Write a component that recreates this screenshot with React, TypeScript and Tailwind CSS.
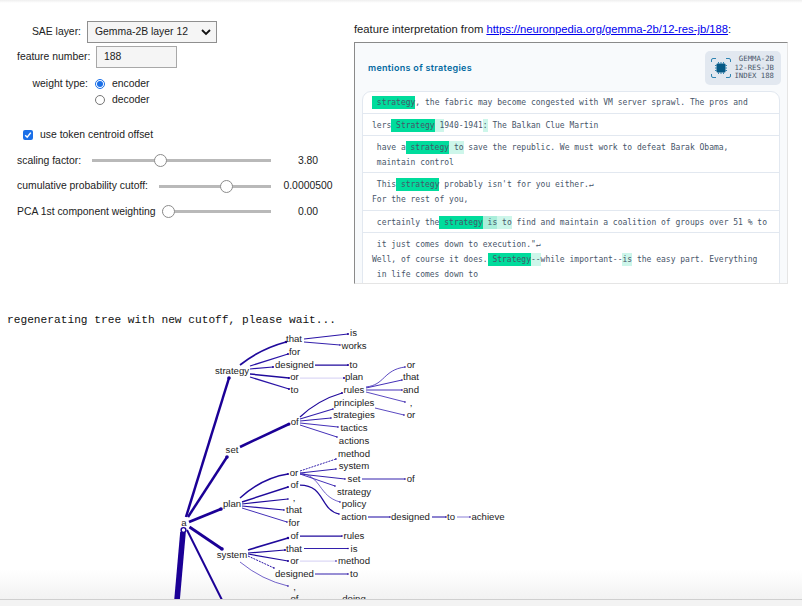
const SANS = "font-['Liberation_Sans',Arial,sans-serif]";

const labels: [string, number, number][] = [
  ["strategy", 232, 371], ["that", 294, 339], ["for", 294.5, 352], ["designed", 294.5, 365],
  ["or", 294.5, 377], ["to", 294.5, 390], ["is", 353.5, 333], ["works", 354, 346],
  ["to", 353.5, 365], ["plan", 354, 377], ["rules", 354, 390], ["or", 411, 365],
  ["that", 411, 377], ["and", 411, 390], [",", 411, 403], ["or", 411, 415],
  ["of", 294.7, 422], ["set", 232, 450], ["principles", 354, 403], ["strategies", 354, 415],
  ["tactics", 354, 428], ["actions", 354, 441], ["method", 354, 453.5], ["system", 354, 466],
  ["or", 294, 472.5], ["of", 294.5, 485], ["set", 354, 479], ["of", 410.7, 479],
  ["strategy", 354, 491.5], ["policy", 354, 504], ["action", 354, 517], ["designed", 410.5, 517],
  ["to", 451, 517], ["achieve", 488, 517], ["plan", 232, 504], [",", 294, 498],
  ["that", 294, 510], ["for", 294, 523], ["a", 184, 523], ["system", 232, 555],
  ["of", 294.5, 536], ["that", 294, 548.5], ["or", 294.5, 561], ["designed", 294.5, 574],
  [",", 294.5, 587], ["of", 294.5, 599], ["rules", 354, 536], ["is", 354, 548.5],
  ["method", 354, 561], ["to", 354, 574], ["doing", 354, 599],
];

// d, stroke width, colour, optional dash
const edges: [string, number, string, string?][] = [
  ["M186 517L229 378", 2, "#1b0096"],
  ["M188 517L227 457", 2, "#1b0096"],
  ["M189 522L221 509", 2.2, "#1b0096"],
  ["M189.5 527L222 549", 2.2, "#1b0096"],
  ["M183 532L176.5 606", 4.5, "#1b0096"],
  ["M187 530L222 600", 1.6, "#1b0096"],
  ["M240 365Q260 349 286 342", 1.4, "#200a9c"],
  ["M250 366L288 354", 1, "#2a14a6"],
  ["M250 369L273 367", 1, "#2a14a6"],
  ["M250 374L289 378", 1.2, "#200a9c"],
  ["M250 377L289 389", 1, "#2a14a6"],
  ["M304 339L348 334", 1, "#2a14a6"],
  ["M304 342L340 345", 0.8, "#3320ac"],
  ["M315 365L348 365", 1, "#200a9c"],
  ["M300 378L344 378", 1, "#dcd8f6"],
  ["M366 387C385 385 383 370 405 367", 0.7, "#4430b8"],
  ["M366 388L402 380", 0.8, "#4430b8"],
  ["M366 390L402 390", 0.8, "#4430b8"],
  ["M366 392L405 402", 0.7, "#4430b8"],
  ["M375 408L404 415", 0.7, "#4430b8"],
  ["M300 417Q318 400 342 393", 1, "#200a9c"],
  ["M300 419L333 409", 0.9, "#3320ac"],
  ["M300 421L331 418", 0.9, "#3320ac"],
  ["M300 423L338 427", 0.8, "#4430b8"],
  ["M300 425L337 437", 0.8, "#4430b8"],
  ["M240 447L289 424", 2, "#1b0096"],
  ["M240 498Q262 478 288 474", 1.2, "#200a9c"],
  ["M242 502L288 487", 1.1, "#200a9c"],
  ["M242 504L288 499", 1, "#200a9c"],
  ["M242 506L284 510", 1, "#2a14a6"],
  ["M242 508L287 522", 0.8, "#4430b8"],
  ["M300 471L336 459", 0.8, "#3320ac", "2 1"],
  ["M300 473L336 469", 0.8, "#3320ac"],
  ["M300 474L345 479", 0.8, "#3320ac"],
  ["M300 474L335 486", 0.8, "#4430b8"],
  ["M300 473C322 476 318 496 340 502", 0.6, "#4430b8"],
  ["M300 485C325 485 320 510 339 514", 1, "#200a9c"],
  ["M362 479L405 479", 0.8, "#3320ac"],
  ["M368 517L390 517", 0.9, "#3320ac"],
  ["M432 517L446 517", 0.9, "#3320ac"],
  ["M457 517L470 517", 0.7, "#7a6dd0"],
  ["M248 550L288 538", 1.4, "#200a9c"],
  ["M248 553L285 550", 1, "#200a9c"],
  ["M248 554L288 561", 1, "#200a9c"],
  ["M248 556L274 568", 0.8, "#2a14a6", "2 1"],
  ["M240 562Q262 580 288 586", 0.6, "#4430b8"],
  ["M300 536L342 536", 1, "#200a9c"],
  ["M304 548.5L348 548.5", 0.8, "#3320ac"],
  ["M300 561L336 561", 1, "#dcd8f6"],
  ["M315 574L348 574", 0.9, "#3320ac"],
];

const dots: [number, number, number][] = [
  [229, 378, 1.8], [227, 457, 1.8], [221, 509, 1.8], [222, 549, 1.8], [286, 342, 1.2], [288, 354, 1],
  [273, 367, 1], [289, 378, 1], [289, 389, 1], [348, 334, 1], [340, 345, 0.8], [348, 365, 1],
  [344, 378, 1], [405, 367, 0.8], [402, 380, 0.8], [402, 390, 0.8], [405, 402, 0.8], [404, 415, 0.8],
  [342, 393, 1], [333, 409, 0.8], [331, 418, 0.8], [338, 427, 0.8], [337, 437, 0.8], [289, 424, 1.5],
  [288, 474, 1], [288, 487, 1], [288, 499, 0.8], [284, 510, 0.8], [287, 522, 0.8], [336, 459, 0.8],
  [336, 469, 0.8], [345, 479, 0.8], [335, 486, 0.8], [340, 502, 0.8], [339, 514, 0.8], [405, 479, 0.8],
  [390, 517, 0.8], [446, 517, 0.8], [470, 517, 0.8], [288, 538, 1.2], [285, 550, 1], [288, 561, 1],
  [274, 568, 0.8], [288, 586, 0.8], [342, 536, 0.8], [348, 548.5, 0.8], [336, 561, 0.8], [348, 574, 0.8],
];

type Seg = { t: string; h?: "s" | "m" | "l" };

const rows: Seg[][][] = [
  [[{ t: " strategy", h: "s" }, { t: ", the fabric may become congested with VM server sprawl. The pros and" }]],
  [[{ t: "lers" }, { t: " Strategy", h: "s" }, { t: " 1", h: "l" }, { t: "940-1941" }, { t: ":", h: "l" }, { t: " The Balkan Clue Martin" }]],
  [
    [{ t: " have a" }, { t: " strategy", h: "s" }, { t: " to", h: "l" }, { t: " save the republic. We must work to defeat Barak Obama," }],
    [{ t: " maintain control" }],
  ],
  [
    [{ t: " This" }, { t: " strategy", h: "s" }, { t: " probably isn't for you either.↵" }],
    [{ t: "For the rest of you," }],
  ],
  [[{ t: " certainly the" }, { t: " strategy", h: "s" }, { t: " is", h: "m" }, { t: " to", h: "l" }, { t: " find and maintain a coalition of groups over 51 % to" }]],
  [
    [{ t: " it just comes down to execution.\"↵" }],
    [{ t: "Well, of course it does." }, { t: " Strategy", h: "s" }, { t: "--", h: "l" }, { t: "while important--" }, { t: "is", h: "l" }, { t: " the easy part. Everything" }],
    [{ t: " in life comes down to" }],
  ],
];

const segClass = { s: "bg-[#00dc9c]", m: "bg-[#a9eeda]", l: "bg-[#cdf6ea]" };

// first row sits a pixel higher, fourth one is a pixel taller
const rowPad = ["pt-[3px] pb-[3px]", "pt-[4px] pb-[2px]", "pt-[4px] pb-[2px]", "pt-[4px] pb-[3px]", "pt-[4px] pb-[2px]", "pt-[4px] pb-[2px]"];

function Slider({ label, labelWidth, pos, value }: { label: string; labelWidth: string; pos: string; value: string }) {
  return (
    <div className="flex items-center h-[13px]">
      <span className={`${labelWidth} shrink-0 whitespace-nowrap`}>{label}</span>
      <div className="relative h-[3px] flex-1 bg-[#b9b9b9]">
        <div className={`absolute top-[-5px] ${pos} w-[13px] h-[13px] rounded-full bg-white border border-[#8c8c8c]`} />
      </div>
      <span className="w-[74px] shrink-0 text-center whitespace-nowrap">{value}</span>
    </div>
  );
}

function Radio({ on, label }: { on?: boolean; label: string }) {
  return (
    <div className="flex items-center gap-[7px] h-[16px]">
      {on ? (
        <span className="w-[10px] h-[10px] rounded-full border border-[#1a6fe8] flex items-center justify-center">
          <span className="w-[6px] h-[6px] rounded-full bg-[#1a6fe8]" />
        </span>
      ) : (
        <span className="w-[10px] h-[10px] rounded-full border border-[#767676] bg-white" />
      )}
      <span>{label}</span>
    </div>
  );
}

function Controls() {
  return (
    <div className="w-[354px] shrink-0 text-[10.4px] leading-[14px] text-[#222] pt-[21px] pl-[17px] pr-[9px]">
      <div className="flex items-center h-[22px]">
        <span className="w-[70px] text-right pr-[6px]">SAE layer:</span>
        <div className="w-[130px] h-[22px] bg-[#f5f5f5] border border-[#8f8f8f] flex items-center justify-between pl-[7px] pr-[5px]">
          <span>Gemma-2B layer 12</span>
          <svg width="10" height="7" viewBox="0 0 10 7" fill="none" stroke="#111" strokeWidth="1.8">
            <path d="M1 1l4 4 4-4" />
          </svg>
        </div>
      </div>
      <div className="flex items-center h-[22px] mt-[3px]">
        <span className="w-[79px] whitespace-nowrap">feature number:</span>
        <div className="w-[81px] h-[22px] bg-[#f5f5f5] border border-[#a8a8a8] flex items-center pl-[7px]">188</div>
      </div>
      <div className="flex mt-[8px]">
        <span className="w-[78px] text-right pr-[7px] leading-[16px]">weight type:</span>
        <div>
          <Radio on label="encoder" />
          <Radio label="decoder" />
        </div>
      </div>
      <div className="flex items-center gap-[7px] mt-[20px] ml-[6px] h-[14px]">
        <span className="w-[10px] h-[10px] rounded-[2px] bg-[#1a6fe8] flex items-center justify-center">
          <svg width="8" height="8" viewBox="0 0 8 8" fill="none" stroke="#fff" strokeWidth="1.5">
            <path d="M1.2 4.2l2 2 3.6-4.6" />
          </svg>
        </span>
        <span>use token centroid offset</span>
      </div>
      <div className="flex flex-col gap-[12.5px] mt-[12px]">
        <Slider label="scaling factor:" labelWidth="w-[75px]" pos="left-[62px]" value="3.80" />
        <Slider label="cumulative probability cutoff:" labelWidth="w-[142px]" pos="left-[61px]" value="0.0000500" />
        <Slider label="PCA 1st component weighting" labelWidth="w-[145px]" pos="left-0" value="0.00" />
      </div>
    </div>
  );
}

function Interpretation() {
  return (
    <div className="w-[434px] pt-[22px]">
      <div className="text-[11.24px] leading-[15px] text-[#222] whitespace-nowrap mb-[5px]">
        feature interpretation from <span className="text-[#0000ee] underline">https://neuronpedia.org/gemma-2b/12-res-jb/188</span>:
      </div>
      <div className="h-[242px] overflow-hidden bg-[#f8fafc] border-t border-l border-[#8a8a8a] border-r border-r-[#e5e5e5] border-b border-b-[#e5e5e5] pl-[7px] pr-[7px] font-['Inter',sans-serif]">
        <div className="flex items-center justify-between h-[48px] pt-[2px] pl-[6px]">
          <span className="text-[9px] font-semibold text-[#0369a1] tracking-[0.3px]">mentions of strategies</span>
          <div className="w-[76px] h-[34px] -mr-[1px] bg-[#e2e8f0] rounded-[5px] flex items-center justify-between pl-[6px] pr-[7px]">
            <svg width="20" height="20" viewBox="0 0 20 20" fill="none" stroke="#0369a1" strokeWidth="0.8">
              <path d="M0.5 4V2Q0.5 0.5 2 0.5H5M15 0.5H18Q19.5 0.5 19.5 2V4M19.5 16V18Q19.5 19.5 18 19.5H15M5 19.5H2Q0.5 19.5 0.5 18V16" />
              <rect x="5.5" y="5.5" width="9" height="9" rx="1" fill="#075985" stroke="none" />
              <path d="M4 7.5H5.5M4 10H5.5M4 12.5H5.5M14.5 7.5H16M14.5 10H16M14.5 12.5H16M7.5 4V5.5M10 4V5.5M12.5 4V5.5M7.5 14.5V16M10 14.5V16M12.5 14.5V16" />
            </svg>
            <div className="font-['DejaVu_Sans_Mono',monospace] text-[7.3px] leading-[8.8px] text-[#475569] text-right whitespace-nowrap">
              <div>GEMMA-2B</div>
              <div>12-RES-JB</div>
              <div>INDEX 188</div>
            </div>
          </div>
        </div>
        <div className="bg-white border border-[#e2e8f0] rounded-t-[9px] font-['DejaVu_Sans_Mono',monospace] text-[8px] leading-[15px] text-[#475569]">
          {rows.map((lines, i) => (
            <div key={i} className={`pl-[9px] ${rowPad[i]} ${i < rows.length - 1 ? "border-b border-[#e2e8f0]" : ""}`}>
              {lines.map((segs, j) => (
                <div key={j} className="whitespace-pre h-[15px]">
                  {segs.map((s, k) => (
                    <span key={k} className={`inline-block h-[13px] leading-[13px] ${s.h ? segClass[s.h] : ""}`}>
                      {s.t}
                    </span>
                  ))}
                </div>
              ))}
            </div>
          ))}
        </div>
      </div>
    </div>
  );
}

function Tree() {
  return (
    <svg width="802" height="300" viewBox="0 306 802 300" className="block relative z-10">
      {edges.map(([d, w, c, dash], i) => (
        <path key={i} d={d} fill="none" stroke={c} strokeWidth={w * 1.25} strokeDasharray={dash} />
      ))}
      {dots.map(([x, y, r], i) => (
        <circle key={i} cx={x} cy={y} r={r} fill="#1b0096" />
      ))}
      <circle cx="183.5" cy="530" r="2.4" fill="#fff" stroke="#1b0096" strokeWidth="1.4" />
      {labels.map(([t, x, y], i) => (
        <text key={i} x={x} y={y + 3.2} textAnchor="middle" fontSize="9.6" fill="#1c1c1c" fontFamily="'Liberation Sans', Arial, sans-serif">
          {t}
        </text>
      ))}
    </svg>
  );
}

export default function App() {
  return (
    <div className={`relative w-[802px] h-[606px] overflow-hidden bg-white ${SANS}`}>
      <div className="flex h-[306px]">
        <Controls />
        <Interpretation />
      </div>
      <div className="absolute left-[7px] top-[313px] font-['Liberation_Mono',monospace] text-[11.2px] leading-[14px] text-[#111] whitespace-pre">
        regenerating tree with new cutoff, please wait...
      </div>
      <div className="absolute inset-x-0 top-[570px] h-[29px] bg-gradient-to-b from-white to-[#f2f2f2]" />
      <Tree />
      <div className="absolute inset-x-0 top-0 h-[3px] bg-gradient-to-b from-[#efefef] to-white" />
      <div className="absolute inset-x-0 bottom-0 z-20 h-[7px] border-t border-[#cfcfcf] bg-[#f3f3f3]" />
    </div>
  );
}
